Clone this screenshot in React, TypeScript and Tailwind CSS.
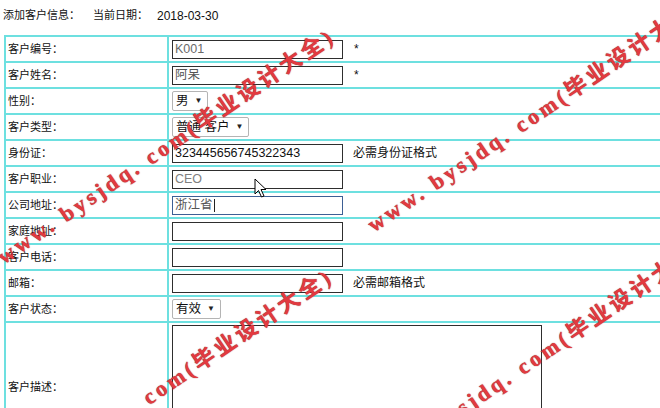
import type { ReactNode } from "react";

const cjk = '"Liberation Sans", "Noto Sans CJK SC", sans-serif';

function Field({ value = "", tone = "text-[#6a6a6a]", focused = false }: { value?: string; tone?: string; focused?: boolean }) {
  return (
    <div
      className={`w-[171px] h-[19px] border bg-white px-[2px] flex items-center text-[12.5px] leading-none ${tone} ${
        focused ? "border-[#3d5f94]" : "border-[#2e2e2e]"
      }`}
    >
      {value}
      {focused && <span className="ml-[1px] w-px h-[13px] bg-[#222]" />}
    </div>
  );
}

function Select({ label }: { label: string }) {
  return (
    <div className="h-[20px] border border-[#b4b4b4] rounded-[2px] bg-white flex items-center pl-[3px] pr-[5px] gap-[6px] text-[12.5px] text-[#111] leading-none">
      <span className="whitespace-pre">{label}</span>
      <span className="text-[8px] text-[#222]">▼</span>
    </div>
  );
}

const rows: { label: string; content: ReactNode }[] = [
  {
    label: "客户编号：",
    content: (
      <>
        <Field value="K001" />
        <span className="ml-[11px] text-[12px]">*</span>
      </>
    ),
  },
  {
    label: "客户姓名：",
    content: (
      <>
        <Field value="阿呆" tone="text-[#555]" />
        <span className="ml-[11px] text-[12px]">*</span>
      </>
    ),
  },
  { label: "性别：", content: <Select label="男" /> },
  { label: "客户类型：", content: <Select label="普通 客户" /> },
  {
    label: "身份证：",
    content: (
      <>
        <Field value="323445656745322343" tone="text-[#111]" />
        <span className="ml-[10px] text-[12px]">必需身份证格式</span>
      </>
    ),
  },
  { label: "客户职业：", content: <Field value="CEO" tone="text-[#808080]" /> },
  { label: "公司地址：", content: <Field value="浙江省" tone="text-[#555]" focused /> },
  { label: "家庭地址：", content: <Field /> },
  { label: "客户电话：", content: <Field /> },
  {
    label: "邮箱：",
    content: (
      <>
        <Field />
        <span className="ml-[10px] text-[12px]">必需邮箱格式</span>
      </>
    ),
  },
  { label: "客户状态：", content: <Select label="有效" /> },
];

const mark = "www. bysjdq. com(毕业设计大全)";

// watermark stamped over the screenshot, two columns repeated down the page
function Watermark() {
  const spots = [
    "left-[6px] top-[246px]",
    "left-[376px] top-[214px]",
    "left-[4px] top-[486px]",
    "left-[378px] top-[456px]",
  ];
  return (
    <div className="absolute inset-0 overflow-hidden pointer-events-none">
      {spots.map((pos, i) => (
        <span
          key={i}
          className={`absolute ${pos} origin-bottom-left -rotate-[34deg] whitespace-nowrap text-[22px] leading-none font-bold tracking-[3.5px] text-[#e23a40] [text-shadow:0_0_1px_#7a1014]`}
          style={{ fontFamily: '"Liberation Serif", "Noto Sans CJK SC", serif' }}
        >
          {mark}
        </span>
      ))}
    </div>
  );
}

export default function App() {
  return (
    <div className="relative h-screen overflow-hidden bg-white text-[#111]" style={{ fontFamily: cjk }}>
      <div className="pl-[3px] pt-[7px] h-[35px] flex items-start text-[11px]">
        <span>添加客户信息：</span>
        <span className="ml-[13px]">当前日期：</span>
        <span className="ml-[9px] text-[12px]">2018-03-30</span>
      </div>

      <div className="ml-[4px] w-[720px] bg-[#6de0e0] p-[2px] grid grid-cols-[161px_1fr] gap-[2px]">
        {rows.map((r) => (
          <div key={r.label} className="contents">
            <div className="bg-white h-[24px] flex items-center pl-[2px] text-[11px]">{r.label}</div>
            <div className="bg-white h-[24px] flex items-center pl-[3px]">{r.content}</div>
          </div>
        ))}
        <div className="bg-white h-[128px] flex items-center pl-[2px] text-[11px]">客户描述：</div>
        <div className="bg-white h-[128px] pl-[3px] pt-[2px]">
          <div className="w-[370px] h-[124px] border border-[#2e2e2e] bg-white" />
        </div>
      </div>

      <svg className="absolute left-[254px] top-[178px]" width="14" height="21" viewBox="0 0 14 21">
        <path d="M1 1 L1 16 L4.5 12.5 L7.5 19 L10 18 L7 11.5 L12 11.5 Z" fill="#fff" stroke="#000" strokeWidth="1" strokeLinejoin="round" />
      </svg>

      <Watermark />
    </div>
  );
}
